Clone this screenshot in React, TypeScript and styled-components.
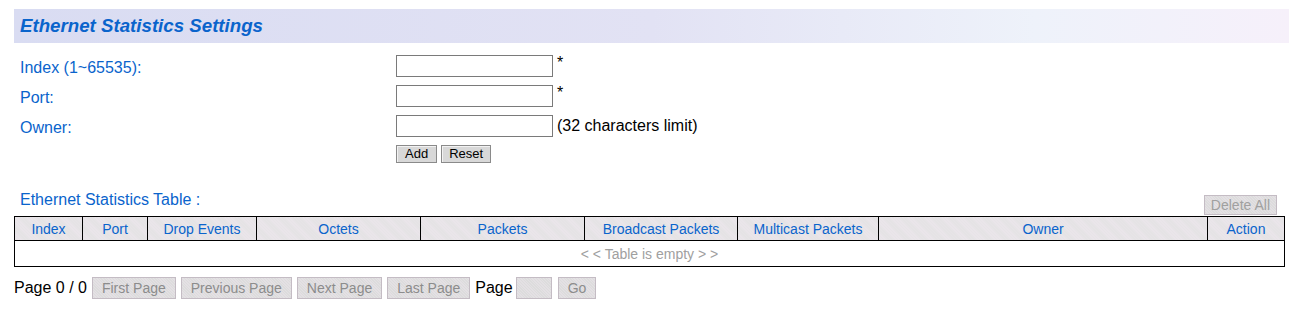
import styled, { createGlobalStyle } from 'styled-components'

const GlobalStyle = createGlobalStyle`
    body {
        margin: 0;
        background: #ffffff;
        font-family: 'Liberation Sans', Arial, sans-serif;
        font-size: 14px;
    }
`

const Page = styled.div`
    padding: 9px 2px 0 14px;
    width: 1275px;
`

const TitleBar = styled.div`
    height: 34px;
    display: flex;
    align-items: center;
    padding-left: 6px;
    background: linear-gradient(90deg, #d9dcf2 0%, #e2e2f4 50%, #eef2fa 80%, #f6f0fa 100%);
`

const Title = styled.h2`
    margin: 0;
    font-size: 18.7px;
    font-weight: bold;
    font-style: italic;
    color: #0a64cc;
`

const Form = styled.div`
    display: grid;
    grid-template-columns: 376px 1fr;
    grid-template-rows: 30px 30px 30px 18px;
    padding: 12px 0 0 6px;
    align-items: start;
`

const Label = styled.div`
    color: #0a64cc;
    font-size: 16px;
    line-height: 22px;
    padding-top: 2px;
`

const FieldCell = styled.div`
    display: flex;
    align-items: flex-start;
    gap: 4px;
    font-size: 16px;
    color: #000;
    line-height: 22px;
`

const Note = styled.span<{ $star?: boolean }>`
    line-height: ${(p) => (p.$star ? '16px' : '22px')};
`

const TextInput = styled.input`
    box-sizing: border-box;
    width: 157px;
    height: 22px;
    margin: 0;
    border: 1px solid #7a7a7a;
    background: #fff;
`

const FormButton = styled.button<{ $pad?: number }>`
    box-sizing: border-box;
    height: 18px;
    padding: 0 ${(p) => p.$pad ?? 7}px;
    margin: 0;
    font-family: 'Liberation Sans', Arial, sans-serif;
    font-size: 13px;
    line-height: 16px;
    color: #000;
    background: #d8d8d8;
    border: 1px solid #8a8a8a;
    box-shadow: inset 1px 1px 0 #f2f2f2;
`

const TableHead = styled.div`
    display: flex;
    align-items: flex-end;
    justify-content: space-between;
    padding: 28px 12px 1px 6px;
`

const TableTitle = styled.div`
    color: #0a64cc;
    font-size: 16px;
    line-height: 18px;
    margin-bottom: 6px;
`

const GreyButton = styled.button`
    box-sizing: border-box;
    height: 22px;
    padding: 0 9px;
    margin: 0;
    font-family: 'Liberation Sans', Arial, sans-serif;
    font-size: 14px;
    color: #8c8c8c;
    background: repeating-linear-gradient(45deg, #e4e0e4 0 1px, #dcdcdc 1px 2px);
    border: 1px solid #c4bcc4;
`

const DeleteButton = styled(GreyButton)`
    height: 20px;
    padding: 0 6px;
    color: #a0a0a0;
`

const Table = styled.table`
    width: 1270px;
    border-collapse: collapse;
    table-layout: fixed;
    font-size: 14px;
`

const Th = styled.th`
    height: 23px;
    padding: 0;
    font-weight: normal;
    color: #0a64cc;
    border: 1px solid #000;
    background: repeating-linear-gradient(45deg, #ece6ec 0 1px, #e2e2e2 1px 2px);
`

const EmptyCell = styled.td`
    height: 25px;
    padding: 0;
    text-align: center;
    color: #a0a0a0;
    border: 1px solid #000;
`

const Pager = styled.div`
    display: flex;
    align-items: center;
    gap: 5px;
    padding-top: 10px;
    font-size: 16px;
    color: #000;
`

const PageInput = styled.div`
    box-sizing: border-box;
    width: 36px;
    height: 22px;
    margin-left: -2px;
    background: repeating-linear-gradient(45deg, #e4e0e4 0 1px, #dcdcdc 1px 2px);
    border: 1px solid #c4bcc4;
`

const GoButton = styled(GreyButton)`
    margin-left: 1px;
`

const columns: [string, number][] = [
    ['Index', 68],
    ['Port', 65],
    ['Drop Events', 109],
    ['Octets', 164],
    ['Packets', 164],
    ['Broadcast Packets', 153],
    ['Multicast Packets', 141],
    ['Owner', 329],
    ['Action', 77],
]

export default function App() {
    return (
        <Page>
            <GlobalStyle />
            <TitleBar>
                <Title>Ethernet Statistics Settings</Title>
            </TitleBar>
            <Form>
                <Label>Index (1~65535):</Label>
                <FieldCell>
                    <TextInput />
                    <Note $star>*</Note>
                </FieldCell>
                <Label>Port:</Label>
                <FieldCell>
                    <TextInput />
                    <Note $star>*</Note>
                </FieldCell>
                <Label>Owner:</Label>
                <FieldCell>
                    <TextInput />
                    <Note>(32 characters limit)</Note>
                </FieldCell>
                <div />
                <FieldCell>
                    <FormButton $pad={8}>Add</FormButton>
                    <FormButton>Reset</FormButton>
                </FieldCell>
            </Form>
            <TableHead>
                <TableTitle>Ethernet Statistics Table :</TableTitle>
                <DeleteButton disabled>Delete All</DeleteButton>
            </TableHead>
            <Table>
                <colgroup>
                    {columns.map(([name, w]) => (
                        <col key={name} style={{ width: w }} />
                    ))}
                </colgroup>
                <thead>
                    <tr>
                        {columns.map(([name]) => (
                            <Th key={name}>{name}</Th>
                        ))}
                    </tr>
                </thead>
                <tbody>
                    <tr>
                        <EmptyCell colSpan={columns.length}>
                            &lt; &lt; Table is empty &gt; &gt;
                        </EmptyCell>
                    </tr>
                </tbody>
            </Table>
            <Pager>
                <span>Page 0 / 0</span>
                <GreyButton>First Page</GreyButton>
                <GreyButton>Previous Page</GreyButton>
                <GreyButton>Next Page</GreyButton>
                <GreyButton>Last Page</GreyButton>
                <span>Page</span>
                <PageInput />
                <GoButton>Go</GoButton>
            </Pager>
        </Page>
    )
}
